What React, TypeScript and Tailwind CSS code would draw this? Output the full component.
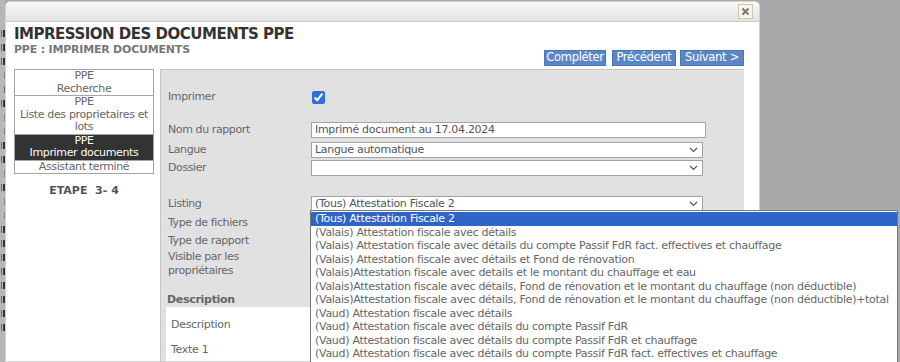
import { ReactNode } from "react";

const listing = [
  "(Tous) Attestation Fiscale 2",
  "(Valais) Attestation fiscale avec détails",
  "(Valais) Attestation fiscale avec détails du compte Passif FdR fact. effectives et chauffage",
  "(Valais) Attestation fiscale avec détails et Fond de rénovation",
  "(Valais)Attestation fiscale avec details et le montant du chauffage et eau",
  "(Valais)Attestation fiscale avec détails, Fond de rénovation et le montant du chauffage (non déductible)",
  "(Valais)Attestation fiscale avec détails, Fond de rénovation et le montant du chauffage (non déductible)+total",
  "(Vaud) Attestation fiscale avec détails",
  "(Vaud) Attestation fiscale avec détails du compte Passif FdR",
  "(Vaud) Attestation fiscale avec détails du compte Passif FdR et chauffage",
  "(Vaud) Attestation fiscale avec détails du compte Passif FdR fact. effectives et chauffage",
];

// fragments of the page that shows behind the dialog
const behind = [4, 4, 4, 2, 3, 4, 2, 2, 4, 4, 1, 4, 2, 2, 4, 4, 4, 4, 4, 4, 4, 4];

function Chevron() {
  return (
    <svg width="9" height="6" viewBox="0 0 9 6" className="shrink-0">
      <path d="M1 1 L4.5 4.5 L8 1" fill="none" stroke="#555" strokeWidth="1.2" />
    </svg>
  );
}

function Select({ value, children }: { value?: string; children?: ReactNode }) {
  return (
    <div className="relative flex h-[16px] w-[392px] items-center justify-between border border-[#a3a3a3] bg-white pl-[3px] pr-[4px] text-[#555]">
      <span className="leading-[14px]">{value}</span>
      <Chevron />
      {children}
    </div>
  );
}

function Row({ label, className, children }: { label: ReactNode; className: string; children?: ReactNode }) {
  return (
    <div className={`flex items-center ${className}`}>
      <div className="w-[143px] shrink-0 leading-[13.5px] tracking-[-0.4px]">{label}</div>
      {children}
    </div>
  );
}

function NavItem({ lines, active }: { lines: string[]; active?: boolean }) {
  return (
    <div
      className={`border-b border-[#a5a5a5] text-center leading-[12.5px] last:border-b-0 ${
        active ? "bg-[#333] text-white" : "bg-white text-[#666]"
      }`}
    >
      {lines.map((l) => (
        <div key={l}>{l}</div>
      ))}
    </div>
  );
}

function Button({ label, w }: { label: string; w: string }) {
  return (
    <div className={`flex h-[16px] ${w} items-center justify-center border border-[#4b76b3] bg-[#5b87c6] text-[11.5px] tracking-[-0.3px] text-white`}>
      {label}
    </div>
  );
}

export default function App() {
  return (
    <div className="flex h-[362px] w-[900px] overflow-hidden bg-[#a9a9a9] font-['DejaVu_Sans',sans-serif] text-[11px] tracking-[-0.3px] text-[#666]">
      <div className="flex w-[5px] shrink-0 flex-col items-end gap-[7px] bg-[#b7b7b7] pt-[30px]">
        {behind.map((w, i) => (
          <div key={i} className="flex h-[7px] items-stretch gap-px">
            <div className="w-px bg-[#555]" style={{ opacity: w > 2 ? 0.8 : 0.5 }} />
            {w > 3 && <div className="w-[2px] bg-[#333]" />}
          </div>
        ))}
      </div>

      <div className="mt-px flex w-[755px] shrink-0 flex-col rounded-t-[5px] border border-[#d2d2d2] bg-white">
        <div className="flex h-[20px] shrink-0 items-center justify-end rounded-t-[5px] border-b border-[#c9c9c9] bg-linear-to-b from-[#f8f8f8] to-[#e4e4e4] pr-[6px]">
          <div className="flex h-[15px] w-[15px] items-center justify-center border border-[#cbc7ad] bg-[#f7f5e8]">
            <svg width="9" height="9" viewBox="0 0 9 9">
              <path d="M1.5 1.5 L7.5 7.5 M7.5 1.5 L1.5 7.5" stroke="#777" strokeWidth="2" />
            </svg>
          </div>
        </div>

        <div className="flex flex-1 flex-col pl-[8px] pr-[15px]">
          <h1 className="mt-[3px] text-[15px] font-bold leading-[18px] tracking-[-0.5px] text-[#333]">
            IMPRESSION DES DOCUMENTS PPE
          </h1>
          <div className="flex items-start justify-between">
            <div className="text-[11px] font-bold leading-[13px] tracking-[-0.2px] text-[#777]">PPE : IMPRIMER DOCUMENTS</div>
            <div className="mt-[7px] flex gap-[4px]">
              <div className="mr-[2px]">
                <Button label="Compléter" w="w-[62px]" />
              </div>
              <Button label="Précédent" w="w-[64px]" />
              <Button label="Suivant >" w="w-[64px]" />
            </div>
          </div>

          <div className="mt-[3px] flex flex-1 gap-[6px]">
            <div className="w-[140px] shrink-0">
              <div className="border border-[#a5a5a5] tracking-[-0.35px]">
                <NavItem lines={["PPE", "Recherche"]} />
                <NavItem lines={["PPE", "Liste des proprietaires et", "lots"]} />
                <NavItem lines={["PPE", "Imprimer documents"]} active />
                <NavItem lines={["Assistant terminé"]} />
              </div>
              <div className="mt-[9px] text-center font-bold tracking-[0px] text-[#555]">ETAPE&nbsp; 3- 4</div>
            </div>

            <div className="flex flex-1 flex-col border-l border-t border-[#c6c6c6] bg-[#e1e1e1] pl-[7px] pr-[5px]">
              <Row label="Imprimer" className="mt-[20px] h-[14px]">
                <input type="checkbox" defaultChecked className="ml-px h-[13px] w-[13px] accent-[#2f6fe0]" />
              </Row>
              <Row label="Nom du rapport" className="mt-[18px] h-[16px]">
                <div className="flex h-[16px] w-[395px] items-center border border-[#a3a3a3] bg-white pl-[3px] leading-[14px] text-[#555]">
                  Imprimé document au 17.04.2024
                </div>
              </Row>
              <Row label="Langue" className="mt-[4px] h-[16px]">
                <Select value="Langue automatique" />
              </Row>
              <Row label="Dossier" className="mt-[2px] h-[16px]">
                <Select />
              </Row>
              <Row label="Listing" className="mt-[20px] h-[16px]">
                <Select value="(Tous) Attestation Fiscale 2">
                  <div className="absolute left-[-2px] top-[13px] z-10 w-[588px] border border-[#767676] bg-white py-px tracking-[-0.29px]">
                    {listing.map((item, i) => (
                      <div
                        key={item}
                        className={`whitespace-nowrap pl-[4px] leading-[13.5px] ${
                          i === 0 ? "bg-[#2f64c9] text-white" : "text-[#666]"
                        }`}
                      >
                        {item}
                      </div>
                    ))}
                  </div>
                </Select>
              </Row>
              <Row label="Type de fichiers" className="mt-[4px] h-[14px]" />
              <Row label="Type de rapport" className="mt-[4px] h-[14px]" />
              <Row label={<>Visible par les<br />propriétaires</>} className="mt-[2px] h-[27px]" />
              <div className="ml-[-1px] mt-[16px] h-[14px] font-bold leading-[14px]">Description</div>
              <div className="ml-[-2px] flex-1 bg-white pl-[5px] pt-[11px]">
                <div className="leading-[13px]">Description</div>
                <div className="mt-[12px] leading-[13px]">Texte 1</div>
              </div>
            </div>
          </div>
        </div>
      </div>
    </div>
  );
}
